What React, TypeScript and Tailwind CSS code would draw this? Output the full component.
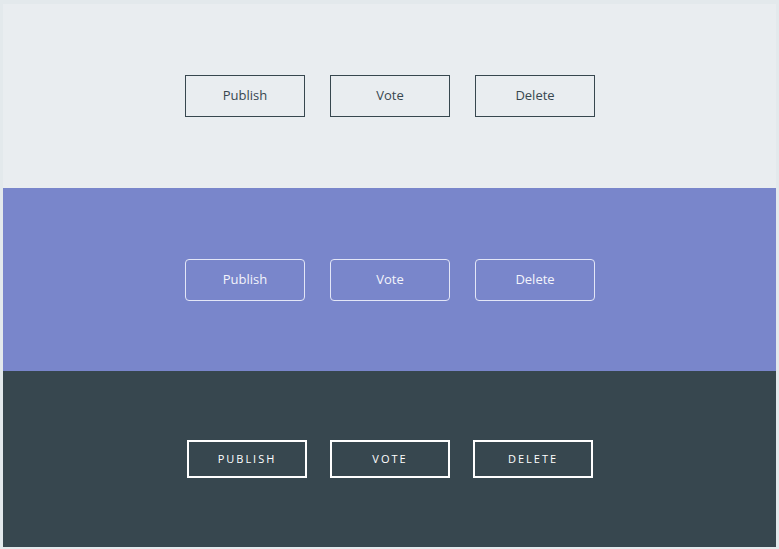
import React from "react";

const labels = ["Publish", "Vote", "Delete"];

export default function App() {
  return (
    <div className="h-[549px] w-[779px] bg-[#e3e9ec] pt-[4px] pb-[2px] pl-[3px] pr-[3px] font-['Open_Sans',sans-serif]">
      <div className="flex h-full flex-col">
        <section className="flex h-[184px] items-center justify-center gap-[25px] bg-[#e9edf0] pl-[1px]">
          {labels.map((l) => (
            <button
              key={l}
              className="h-[42px] w-[120px] border border-[#37474f] text-[13px] font-medium text-[#37474f]"
            >
              {l}
            </button>
          ))}
        </section>
        <section className="flex h-[183px] items-center justify-center gap-[25px] bg-[#7986cb] pl-[1px]">
          {labels.map((l) => (
            <button
              key={l}
              className="h-[42px] w-[120px] rounded-[4px] border border-[#e3e6f7] text-[13px] font-medium text-[#f3f4fb]"
            >
              {l}
            </button>
          ))}
        </section>
        <section className="flex flex-1 items-center justify-center gap-[23px] bg-[#37474f] pl-[1px]">
          {labels.map((l) => (
            <button
              key={l}
              className="h-[38px] w-[120px] border-2 border-white text-[11px] font-medium uppercase tracking-[2px] text-white"
            >
              {l}
            </button>
          ))}
        </section>
      </div>
    </div>
  );
}
